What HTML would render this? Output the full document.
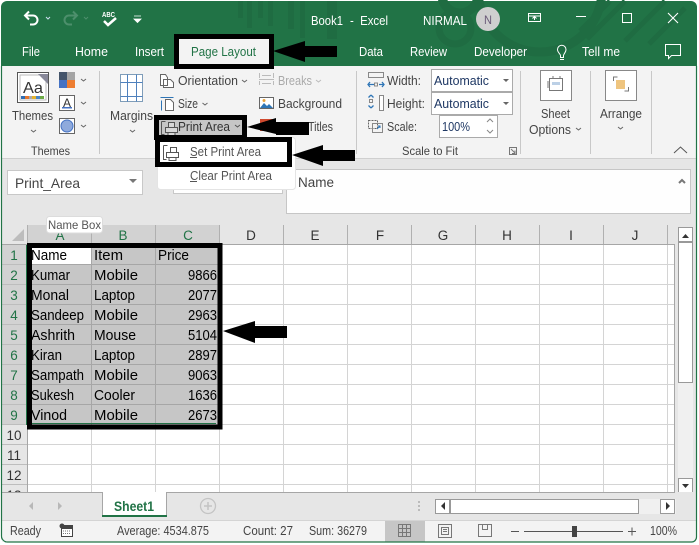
<!DOCTYPE html>
<html><head><meta charset="utf-8"><title>Excel</title>
<style>
html,body{margin:0;padding:0;background:#fff;width:699px;height:545px;overflow:hidden}
svg{display:block}
text{font-family:"Liberation Sans",sans-serif;font-size:13px;fill:#444}
.w{fill:#fff}
.g{fill:#000;font-size:14.5px}
.h{fill:#217346;font-size:13.5px}
.k{fill:#333;font-size:13.5px}
.a{fill:#1f3864}
</style></head><body>
<svg width="699" height="545" viewBox="0 0 699 545" xmlns="http://www.w3.org/2000/svg">
<!-- window -->
<rect x="1" y="1" width="696" height="541.5" rx="6" fill="#217346"/>
<!-- title decoration -->
<g fill="#1f6c42">
<rect x="238" y="1" width="5" height="17"/><rect x="247" y="1" width="5" height="27"/><rect x="258" y="1" width="5" height="17"/><rect x="268" y="1" width="5" height="25"/>
<rect x="288" y="1" width="6" height="28"/><rect x="300" y="1" width="5" height="37"/><rect x="327" y="1" width="10" height="38"/>
</g>
<g fill="none" stroke="#1f6c42">
<circle cx="460" cy="-5" r="18" stroke-width="9"/>
<circle cx="455" cy="28" r="16" stroke-width="7"/>
<circle cx="540" cy="-10" r="62" stroke-width="9"/>
<path d="M610 1l-30 30M625 1l-38 38M665 1l-40 40M685 8l-36 36" stroke-width="5"/>
</g>
<!-- ribbon -->
<rect x="2" y="66" width="694" height="92" fill="#f3f3f3"/>
<!-- formula area and sheet -->
<rect x="2" y="158" width="694" height="384" fill="#e6e6e6"/>
<rect x="2" y="158" width="694" height="1" fill="#cfcfcf"/>
<rect x="7.500" y="170.500" width="135" height="24" fill="#fff" stroke="#c8c8c8"/>
<rect x="173.500" y="170.500" width="109" height="23" fill="#fff" stroke="#c8c8c8"/>
<rect x="286.500" y="169.500" width="404" height="44" fill="#fefefe" stroke="#c6c6c6"/>
<text x="15" y="188" textLength="65" lengthAdjust="spacingAndGlyphs" style="font-size:14px">Print_Area</text>
<path d="M129 179h8l-4 4z" fill="#777"/>
<text x="298" y="187" textLength="36" lengthAdjust="spacingAndGlyphs" style="font-size:13.500px">Name</text>
<path d="M679 183l3-3 3 3" fill="none" stroke="#777" stroke-width="2"/>

<!-- title bar items -->
<path d="M25 15.500h8a4.500 4.500 0 0 1 0 9h-3M29 11.500l-4 4 4 4" fill="none" stroke="#fff" stroke-width="2"/>
<path d="M46 17l2 2 2-2" fill="none" stroke="#cde" stroke-width="1"/>
<path d="M77 15.500h-8a4.500 4.500 0 0 0 0 9h3M73 11.500l4 4-4 4" fill="none" stroke="#4d8f6c" stroke-width="2"/>
<path d="M84 17l2 2 2-2" fill="none" stroke="#4d8f6c" stroke-width="1"/>
<text x="102" y="17" textLength="13" lengthAdjust="spacingAndGlyphs" class="w" style="font-size:7px;font-weight:bold">ABC</text>
<path d="M104 21l4 4 8-7" fill="none" stroke="#fff" stroke-width="2.500"/>
<path d="M134 16h7M134 19h7l-3.500 3.500z" fill="#fff" stroke="#fff" stroke-width=".8"/>
<text x="311" y="25" textLength="32" lengthAdjust="spacingAndGlyphs" class="w">Book1</text>
<text x="350" y="25" textLength="38" lengthAdjust="spacingAndGlyphs" class="w">-&#160; Excel</text>
<text x="423" y="25" textLength="44" lengthAdjust="spacingAndGlyphs" class="w">NIRMAL</text>
<circle cx="488" cy="19" r="12" fill="#cfcfcf"/>
<text x="484" y="24" textLength="8" lengthAdjust="spacingAndGlyphs" style="font-size:12px;fill:#6a5a78">N</text>
<path d="M528.500 13.500h12v8h-12zM528.500 16h12M534.500 20v-3M532.500 18.500l2-2 2 2" fill="none" stroke="#fff"/>
<rect x="576" y="16" width="10" height="1" fill="#fff"/>
<rect x="622.500" y="13.500" width="9" height="9" fill="none" stroke="#fff"/>
<path d="M668 13l10 10M678 13l-10 10" stroke="#fff" stroke-width="1.100"/>

<!-- tabs -->
<text x="22" y="56" textLength="18" lengthAdjust="spacingAndGlyphs" class="w">File</text>
<text x="75" y="56" textLength="33" lengthAdjust="spacingAndGlyphs" class="w">Home</text>
<text x="135" y="56" textLength="29" lengthAdjust="spacingAndGlyphs" class="w">Insert</text>
<text x="359" y="56" textLength="24" lengthAdjust="spacingAndGlyphs" class="w">Data</text>
<text x="410" y="56" textLength="37" lengthAdjust="spacingAndGlyphs" class="w">Review</text>
<text x="474" y="56" textLength="53" lengthAdjust="spacingAndGlyphs" class="w">Developer</text>
<text x="582" y="56" textLength="38" lengthAdjust="spacingAndGlyphs" class="w">Tell me</text>
<path d="M560 59.500h4M560.500 57.500h3v-2c0-1.500 2.500-3 2.500-6a4.200 4.200 0 0 0-8.500 0c0 3 3 4.500 3 6z" fill="none" stroke="#fff"/>
<path d="M665.500 44.500h15v11h-9l-3 3v-3h-3z" fill="none" stroke="#fff"/>
<rect x="179" y="39" width="90" height="27" fill="#f3f3f3"/>
<text x="191" y="56" textLength="65" lengthAdjust="spacingAndGlyphs" style="fill:#217346">Page Layout</text>

<!-- themes group -->
<rect x="17.500" y="72.500" width="31" height="30" fill="#fff" stroke="#555"/>
<rect x="20" y="75" width="26" height="25" fill="#fff" stroke="#bbb"/>
<path d="M38 74h10v10z" fill="#889"/>
<text x="23" y="93" textLength="20" lengthAdjust="spacingAndGlyphs" style="font-size:16px;fill:#333">Aa</text>
<g><rect x="21" y="96" width="4" height="3" fill="#2e6db4"/><rect x="25" y="96" width="4" height="3" fill="#e5762d"/><rect x="29" y="96" width="3" height="3" fill="#aaa"/><rect x="32" y="96" width="4" height="3" fill="#e3b22d"/><rect x="36" y="96" width="4" height="3" fill="#4b86c6"/><rect x="40" y="96" width="4" height="3" fill="#6dab46"/></g>
<rect x="59" y="72" width="15" height="8" fill="#44546a"/><rect x="67" y="72" width="8" height="8" fill="#a5a5a5"/><rect x="59" y="80" width="8" height="8" fill="#4472c4"/><rect x="67" y="80" width="8" height="8" fill="#ed7d31"/>
<rect x="59.500" y="95.500" width="15" height="15" fill="#fff" stroke="#666"/>
<text x="63" y="107" textLength="8" lengthAdjust="spacingAndGlyphs" style="font-size:12px;fill:#333">A</text>
<rect x="62" y="107" width="10" height="1.500" fill="#4472c4"/>
<rect x="59.500" y="118.500" width="15" height="15" fill="#fff" stroke="#666"/>
<circle cx="67" cy="126" r="6" fill="#8faadc" stroke="#4472c4"/>
<g fill="none" stroke="#666"><path d="M81 79l2.500 2 2.500-2M81 102l2.500 2 2.500-2M81 125l2.500 2 2.500-2M31 130l2.500 2 2.500-2M130 130l2.500 2 2.500-2"/></g>
<text x="12" y="120" textLength="41" lengthAdjust="spacingAndGlyphs">Themes</text>
<text x="31" y="155" textLength="39" lengthAdjust="spacingAndGlyphs" style="font-size:12px">Themes</text>
<rect x="99" y="71" width="1" height="83" fill="#c8c8c8"/>

<!-- margins -->
<rect x="120.500" y="74.500" width="22" height="27" fill="#fff" stroke="#7f9db9"/>
<path d="M127.500 74.500v27M136.500 74.500v27M120.500 82.500h22M120.500 96.500h22" fill="none" stroke="#4f81bd"/>
<text x="110" y="120" textLength="43" lengthAdjust="spacingAndGlyphs">Margins</text>

<!-- page setup column -->
<path d="M160.500 74.500h5l2 3v8h-7zM163.500 79.500h7l3 3v5h-10z" fill="#fff" stroke="#666"/>
<text x="178" y="85" textLength="60" lengthAdjust="spacingAndGlyphs">Orientation</text>
<path d="M242 80l2.500 2 2.500-2" fill="none" stroke="#666"/>
<path d="M160.500 97.500h13M161.500 100.500v10" stroke="#2e75b6" fill="none"/>
<path d="M165.500 99.500h5l3 3v8h-8z" fill="#fff" stroke="#666"/>
<text x="178" y="108" textLength="20" lengthAdjust="spacingAndGlyphs">Size</text>
<path d="M202.500 103l2.500 2 2.500-2" fill="none" stroke="#666"/>
<path d="M259.500 73v5M273.500 73v5M259.500 85v-4M273.500 85v-4M259 79.500h15M262 75.500h9M262 83.500h9" stroke="#bbb" fill="none"/>
<text x="278" y="85" textLength="34" lengthAdjust="spacingAndGlyphs" style="fill:#aaa">Breaks</text>
<path d="M316 80l2.500 2 2.500-2" fill="none" stroke="#bbb"/>
<rect x="259.500" y="97.500" width="14" height="11" fill="#fff" stroke="#666"/>
<path d="M260 108l4-5 3 3 2-2 4 4z" fill="#2e75b6"/><circle cx="264" cy="100.500" r="1.500" fill="#e8a33d"/>
<text x="278" y="108" textLength="64" lengthAdjust="spacingAndGlyphs">Background</text>
<rect x="260" y="119" width="14" height="12" fill="#d04a2f"/>
<text x="308" y="131" textLength="25" lengthAdjust="spacingAndGlyphs">Titles</text>
<rect x="159" y="120" width="83" height="17" fill="#c6c6c6"/>
<path d="M161.500 121.500h4M161.500 121.500v13h3" fill="none" stroke="#555"/>
<path d="M168.500 122.500h6v5h-6zM165.500 127.500h12v5h-12zM168 132.500h7v3h-7z" fill="#d8d8d8" stroke="#555"/>
<text x="178" y="131" textLength="52" lengthAdjust="spacingAndGlyphs" style="fill:#333">Print Area</text>
<path d="M235 125l2.500 2 2.500-2" fill="none" stroke="#555"/>

<!-- scale group -->
<rect x="356" y="71" width="1" height="83" fill="#c8c8c8"/>
<path d="M368.500 72.500h15v5h-15z" fill="none" stroke="#888"/>
<path d="M369 84.500h5M379 84.500h5M370 82l-2 2.500 2 2.500M382 82l2 2.500-2 2.500" fill="none" stroke="#2e75b6" stroke-width="1.300"/>
<rect x="374.500" y="83" width="3" height="3" fill="none" stroke="#888"/>
<path d="M371 95l-2.500 2.500M371 95l2.500 2.500M371 108l-2.500-2.500M371 108l2.500-2.500" stroke="#2e75b6" stroke-width="1.300" fill="none"/>
<rect x="369.500" y="99.500" width="3" height="3" fill="none" stroke="#888"/>
<rect x="379.500" y="95.500" width="4" height="15" fill="#fff" stroke="#888"/>
<path d="M368.500 120.500h9v8h-9z" fill="none" stroke="#666" stroke-dasharray="2 1"/>
<path d="M372.500 123.500h10v9h-10z" fill="none" stroke="#888"/>
<path d="M377 129l3-3M378 126h2v2" fill="none" stroke="#2e75b6"/>
<text x="387" y="85" textLength="34" lengthAdjust="spacingAndGlyphs">Width:</text>
<text x="387" y="108" textLength="38" lengthAdjust="spacingAndGlyphs">Height:</text>
<text x="387" y="131" textLength="30" lengthAdjust="spacingAndGlyphs">Scale:</text>
<rect x="431.500" y="69.500" width="81" height="22" fill="#fff" stroke="#aaa"/>
<rect x="431.500" y="92.500" width="81" height="22" fill="#fff" stroke="#aaa"/>
<rect x="439.500" y="115.500" width="58" height="22" fill="#fff" stroke="#aaa"/>
<text x="434" y="85" textLength="55" lengthAdjust="spacingAndGlyphs" class="a">Automatic</text>
<text x="434" y="108" textLength="55" lengthAdjust="spacingAndGlyphs" class="a">Automatic</text>
<text x="442" y="131" textLength="28" lengthAdjust="spacingAndGlyphs" class="a">100%</text>
<path d="M503 79h6l-3 3zM503 102h6l-3 3z" fill="#666"/>
<path d="M487 122l3-3 3 3M487 130l3 3 3-3" fill="none" stroke="#888"/>
<text x="402" y="155" textLength="56" lengthAdjust="spacingAndGlyphs" style="font-size:12px">Scale to Fit</text>
<path d="M509.500 147.500h7v7h-7zM511 149l4 4M515 150.500v3h-3" fill="none" stroke="#777"/>
<rect x="520" y="71" width="1" height="83" fill="#c8c8c8"/>
<rect x="590" y="71" width="1" height="83" fill="#c8c8c8"/>
<rect x="651" y="71" width="1" height="83" fill="#c8c8c8"/>
<rect x="540.500" y="70.500" width="31" height="30" fill="#fff" stroke="#888"/>
<path d="M549.500 78.500h13v12h-13zM548 81v7M553 76v3M560 76v3" fill="none" stroke="#777"/>
<rect x="552" y="82" width="8" height="3" fill="#bcd0e6"/>
<text x="541" y="118" textLength="29" lengthAdjust="spacingAndGlyphs">Sheet</text>
<text x="529" y="134" textLength="42" lengthAdjust="spacingAndGlyphs">Options</text>
<path d="M576 128l2.500 2 2.500-2M618 127l2.500 2 2.500-2" fill="none" stroke="#666"/>
<rect x="605.500" y="70.500" width="31" height="30" fill="#fff" stroke="#888"/>
<path d="M613.500 81v-4h4M628.500 87v4h-4" fill="none" stroke="#777"/>
<rect x="616" y="80" width="9" height="9" fill="#efc57f"/>
<text x="600" y="118" textLength="42" lengthAdjust="spacingAndGlyphs">Arrange</text>
<path d="M674 153l6.500-6 6.500 6" fill="none" stroke="#555"/>

<!-- sheet -->
<rect x="2" y="225" width="673" height="20" fill="#e6e6e6"/>
<rect x="2" y="245" width="26" height="247" fill="#e6e6e6"/>
<rect x="28" y="225" width="192" height="19" fill="#d2d2d2"/>
<rect x="2" y="245" width="25" height="180" fill="#d2d2d2"/>
<path d="M12 241l12-12v12z" fill="#bdbdbd"/>
<rect x="28" y="245" width="646" height="247" fill="#fff"/>
<g stroke="#d4d4d4" fill="none">
<path d="M91.500 245v247M155.500 245v247M219.500 245v247M283.500 245v247M347.500 245v247M411.500 245v247M475.500 245v247M539.500 245v247M603.500 245v247M667.500 245v247"/>
<path d="M28 264.500h646M28 284.500h646M28 304.500h646M28 324.500h646M28 344.500h646M28 364.500h646M28 384.500h646M28 404.500h646M28 424.500h646M28 444.500h646M28 464.500h646M28 484.500h646"/>
</g>
<path d="M27.500 225v20M91.500 225v20M155.500 225v20M219.500 225v20M283.500 225v20M347.500 225v20M411.500 225v20M475.500 225v20M539.500 225v20M603.500 225v20M667.500 225v20" stroke="#b0b0b0" fill="none"/>
<rect x="2" y="244" width="673" height="1" fill="#a6a6a6"/>
<rect x="27" y="244" width="1" height="248" fill="#a6a6a6"/>
<rect x="674" y="244" width="1" height="248" fill="#a6a6a6"/>
<path d="M2 264.500h25M2 284.500h25M2 304.500h25M2 324.500h25M2 344.500h25M2 364.500h25M2 384.500h25M2 404.500h25M2 424.500h25M2 444.500h25M2 464.500h25M2 484.500h25" stroke="#bdbdbd"/>
<!-- selection -->
<rect x="28" y="245" width="192" height="180" fill="#c6c6c6"/>
<rect x="28" y="245" width="63" height="19" fill="#fff"/>
<path d="M91.500 245v180M155.500 245v180M28 264.500h192M28 284.500h192M28 304.500h192M28 324.500h192M28 344.500h192M28 364.500h192M28 384.500h192M28 404.500h192" stroke="#a6a6a6" fill="none"/>
<rect x="26" y="245" width="1.500" height="180" fill="#217346"/>
<!-- col header text -->
<g text-anchor="middle">
<text x="60" y="240" class="h">A</text><text x="123" y="240" class="h">B</text><text x="188" y="240" class="h">C</text>
<text x="251" y="240" class="k">D</text><text x="315" y="240" class="k">E</text><text x="380" y="240" class="k">F</text><text x="443" y="240" class="k">G</text><text x="507" y="240" class="k">H</text><text x="571" y="240" class="k">I</text><text x="635" y="240" class="k">J</text>
<text x="14" y="260" class="h">1</text><text x="14" y="280" class="h">2</text><text x="14" y="300" class="h">3</text><text x="14" y="320" class="h">4</text><text x="14" y="340" class="h">5</text><text x="14" y="360" class="h">6</text><text x="14" y="380" class="h">7</text><text x="14" y="400" class="h">8</text><text x="14" y="420" class="h">9</text>
<text x="14" y="440" class="k">10</text><text x="14" y="460" class="k">11</text><text x="14" y="480" class="k">12</text>
<text x="14" y="500" class="k">13</text>
</g>
<!-- cells -->
<text x="31" y="260" textLength="36" lengthAdjust="spacingAndGlyphs" class="g">Name</text>
<text x="94" y="260" textLength="29" lengthAdjust="spacingAndGlyphs" class="g">Item</text>
<text x="158" y="260" textLength="31" lengthAdjust="spacingAndGlyphs" class="g">Price</text>
<text x="31" y="280" textLength="39" lengthAdjust="spacingAndGlyphs" class="g">Kumar</text><text x="94" y="280" textLength="44" lengthAdjust="spacingAndGlyphs" class="g">Mobile</text><text x="188" y="280" textLength="29" lengthAdjust="spacingAndGlyphs" class="g">9866</text>
<text x="31" y="300" textLength="38" lengthAdjust="spacingAndGlyphs" class="g">Monal</text><text x="94" y="300" textLength="41" lengthAdjust="spacingAndGlyphs" class="g">Laptop</text><text x="188" y="300" textLength="29" lengthAdjust="spacingAndGlyphs" class="g">2077</text>
<text x="31" y="320" textLength="53" lengthAdjust="spacingAndGlyphs" class="g">Sandeep</text><text x="94" y="320" textLength="44" lengthAdjust="spacingAndGlyphs" class="g">Mobile</text><text x="188" y="320" textLength="29" lengthAdjust="spacingAndGlyphs" class="g">2963</text>
<text x="31" y="340" textLength="44" lengthAdjust="spacingAndGlyphs" class="g">Ashrith</text><text x="94" y="340" textLength="42" lengthAdjust="spacingAndGlyphs" class="g">Mouse</text><text x="188" y="340" textLength="29" lengthAdjust="spacingAndGlyphs" class="g">5104</text>
<text x="31" y="360" textLength="31" lengthAdjust="spacingAndGlyphs" class="g">Kiran</text><text x="94" y="360" textLength="41" lengthAdjust="spacingAndGlyphs" class="g">Laptop</text><text x="188" y="360" textLength="29" lengthAdjust="spacingAndGlyphs" class="g">2897</text>
<text x="31" y="380" textLength="53" lengthAdjust="spacingAndGlyphs" class="g">Sampath</text><text x="94" y="380" textLength="44" lengthAdjust="spacingAndGlyphs" class="g">Mobile</text><text x="188" y="380" textLength="29" lengthAdjust="spacingAndGlyphs" class="g">9063</text>
<text x="31" y="400" textLength="43" lengthAdjust="spacingAndGlyphs" class="g">Sukesh</text><text x="94" y="400" textLength="41" lengthAdjust="spacingAndGlyphs" class="g">Cooler</text><text x="188" y="400" textLength="29" lengthAdjust="spacingAndGlyphs" class="g">1636</text>
<text x="31" y="420" textLength="36" lengthAdjust="spacingAndGlyphs" class="g">Vinod</text><text x="94" y="420" textLength="44" lengthAdjust="spacingAndGlyphs" class="g">Mobile</text><text x="188" y="420" textLength="29" lengthAdjust="spacingAndGlyphs" class="g">2673</text>
<!-- selection annotation border drawn over the cell text -->
<rect x="29.500" y="245.500" width="190.500" height="181.500" fill="none" stroke="#000" stroke-width="5"/>
<rect x="32" y="423" width="184" height="1" fill="#217346"/>
<!-- tooltip -->
<rect x="46.500" y="216.500" width="56" height="16.500" rx="3" fill="#fff" stroke="#dcdcdc"/>
<text x="48" y="229" textLength="53" lengthAdjust="spacingAndGlyphs" style="font-size:12px;fill:#555">Name Box</text>

<!-- vertical scrollbar -->
<rect x="678" y="245" width="15" height="234" fill="#f0f0f0"/>
<rect x="678.500" y="227.500" width="14" height="14" fill="#fff" stroke="#999"/>
<path d="M682 238h7l-3.500-4z" fill="#333"/>
<rect x="678.500" y="242.500" width="14" height="140" fill="#fff" stroke="#999"/>
<rect x="678.500" y="478.500" width="14" height="14" fill="#fff" stroke="#999"/>
<path d="M682 484h7l-3.500 4z" fill="#333"/>

<!-- tab strip -->
<rect x="2" y="492" width="694" height="28" fill="#e6e6e6"/>
<rect x="2" y="492" width="673" height="1" fill="#a6a6a6"/>
<rect x="103" y="492" width="63" height="24" fill="#fff"/>
<path d="M102.500 493v23M166.500 493v23" stroke="#a6a6a6"/>
<rect x="102" y="515" width="65" height="2" fill="#217346"/>
<text x="114" y="511" textLength="40" lengthAdjust="spacingAndGlyphs" style="font-weight:bold;font-size:13.500px;fill:#217346">Sheet1</text>
<path d="M33 502v8l-4-4zM58 502v8l4-4z" fill="#b8b8b8"/>
<circle cx="208" cy="506" r="7.500" fill="none" stroke="#c4c4c4" stroke-width="1.300"/>
<path d="M204 506h8M208 502v8" stroke="#c4c4c4" stroke-width="1.500"/>
<g fill="#bbb"><rect x="418" y="501" width="2" height="2"/><rect x="418" y="505" width="2" height="2"/><rect x="418" y="509" width="2" height="2"/></g>
<rect x="450" y="499" width="226" height="15" fill="#f0f0f0"/>
<rect x="435.500" y="499.500" width="14" height="14" fill="#fff" stroke="#999"/>
<path d="M445 502v8l-4-4z" fill="#333"/>
<rect x="450.500" y="499.500" width="188" height="14" fill="#fff" stroke="#999"/>
<rect x="660.500" y="499.500" width="14" height="14" fill="#fff" stroke="#999"/>
<path d="M666 502v8l4-4z" fill="#333"/>

<!-- status bar -->
<rect x="2" y="520" width="694" height="22" fill="#f3f3f3"/>
<rect x="2" y="520" width="694" height="1" fill="#d4d4d4"/>
<text x="10" y="535" textLength="31" lengthAdjust="spacingAndGlyphs" style="font-size:12.500px">Ready</text>
<circle cx="62" cy="526" r="2.500" fill="#444"/>
<rect x="61" y="525" width="12" height="3" fill="#444"/>
<rect x="61.500" y="528.500" width="11" height="8" fill="#fff" stroke="#444"/>
<path d="M63 531h8M63 533.500h8" stroke="#777" stroke-dasharray="1 1"/>
<text x="117" y="535" textLength="92" lengthAdjust="spacingAndGlyphs" style="font-size:12.500px">Average: 4534.875</text>
<text x="243" y="535" textLength="50" lengthAdjust="spacingAndGlyphs" style="font-size:12.500px">Count: 27</text>
<text x="309" y="535" textLength="58" lengthAdjust="spacingAndGlyphs" style="font-size:12.500px">Sum: 36279</text>
<rect x="385" y="521" width="40" height="21" fill="#c6c6c6"/>
<path d="M398.500 524.500h12v12h-12zM402.500 524.500v12M406.500 524.500v12M398.500 528.500h12M398.500 532.500h12" fill="none" stroke="#777"/>
<path d="M438.500 524.500h13v13h-13zM441.500 527.500h7v7h-7zM443 529.500h4M443 531.500h4" fill="none" stroke="#777"/>
<path d="M478.500 524.500h13v12h-13zM482.500 524.500v5h5v-5" fill="none" stroke="#777"/>
<rect x="511" y="531" width="8" height="1" fill="#555"/>
<rect x="524" y="531" width="99" height="1" fill="#555"/>
<rect x="572" y="526" width="5" height="11" fill="#444"/>
<path d="M628 531.500h8M632 527.500v8" stroke="#555"/>
<text x="650" y="535" textLength="27" lengthAdjust="spacingAndGlyphs" style="font-size:12.500px">100%</text>

<!-- green window edge -->
<path d="M1.500 66v470a6 6 0 0 0 6 6h684a5 5 0 0 0 5-5v-471" fill="none" stroke="#217346" stroke-width="1.200"/>

<!-- dropdown -->
<rect x="157.500" y="137.500" width="138" height="52" rx="3" fill="#fff" stroke="#e4e4e4"/>
<text x="190" y="156" textLength="71" lengthAdjust="spacingAndGlyphs" style="font-size:12.500px;fill:#555">Set Print Area</text>
<rect x="190" y="157" width="7" height="1" fill="#555"/>
<text x="190" y="180" textLength="82" lengthAdjust="spacingAndGlyphs" style="font-size:12.500px;fill:#555">Clear Print Area</text>
<rect x="190" y="181" width="7" height="1" fill="#555"/>
<path d="M163.500 145.500h4M163.500 145.500v14h3" fill="none" stroke="#555"/>
<path d="M170.500 147.500h6v5h-6zM166.500 152.500h12v5h-12zM169 157.500h7v3h-7z" fill="#fff" stroke="#555"/>

<!-- annotation boxes -->
<rect x="176.500" y="36.500" width="95" height="30" fill="none" stroke="#000" stroke-width="5"/>
<rect x="156.500" y="117.500" width="88" height="20" fill="none" stroke="#000" stroke-width="5"/>
<rect x="157.500" y="139.500" width="132" height="25" fill="none" stroke="#000" stroke-width="5"/>
<!-- arrows -->
<path d="M273 51l32-10v5h32v11h-32v5z" fill="#000"/>
<path d="M247 127l29-9v4h33v13h-33v-1z" fill="#000"/>
<path d="M292 155l31-10v5h32v11h-32v5z" fill="#000"/>
<path d="M223 331l32-10v5h32v12h-32v5z" fill="#000"/>
</svg>
</body></html>
